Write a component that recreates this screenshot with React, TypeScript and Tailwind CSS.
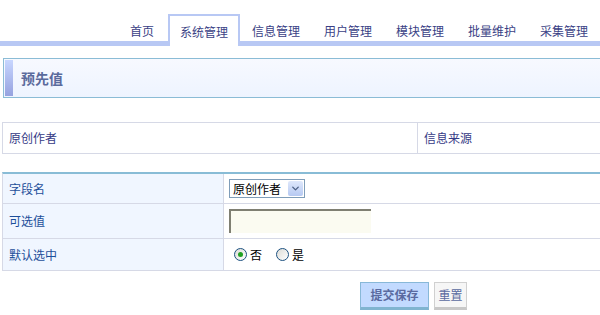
import { ChevronDown } from "lucide-react";

const tabs = ["首页", "系统管理", "信息管理", "用户管理", "模块管理", "批量维护", "采集管理"];

const font = { fontFamily: '"Noto Sans CJK SC", "Noto Sans", sans-serif' };

function Radio({ checked, label }: { checked?: boolean; label: string }) {
  return (
    <label className="flex items-center gap-[3px] text-[12px] text-black">
      <span className="flex h-[13px] w-[13px] items-center justify-center rounded-full border border-[#1c5180] bg-gradient-to-br from-[#dcdcd7] to-white">
        {checked && <span className="h-[5px] w-[5px] rounded-full bg-[#21a121]" />}
      </span>
      {label}
    </label>
  );
}

export default function App() {
  return (
    <div className="w-[600px] h-[315px] overflow-hidden bg-white text-[12px]" style={font}>
      {/* top nav tabs */}
      <div className="flex h-[46px] items-end justify-end border-b-[5px] border-[#b8c8f4]">
        {tabs.map((tab) => {
          const active = tab === "系统管理";
          return (
            <div
              key={tab}
              className={`relative mb-[-5px] flex h-[32px] items-center justify-center pt-[1px] text-[#3a3f85] ${
                tab === "首页" ? "w-[52px]" : "w-[72px]"
              } ${active ? "border-2 border-b-0 border-[#b8c8f4] bg-white" : ""}`}
            >
              {tab}
            </div>
          );
        })}
      </div>

      {/* section title */}
      <div className="ml-[3px] mt-[12px] flex h-[40px] items-stretch border border-r-0 border-[#8bbcd6] bg-gradient-to-b from-[#f7f9ff] to-[#eef4ff] p-[1px] pr-0">
        <div className="w-[8px] bg-gradient-to-b from-[#c8d6ff] to-[#96a2df]" />
        <div className="flex items-center pl-[8px] text-[14px] font-bold text-[#5a6a9c]">预先值</div>
      </div>

      {/* field list */}
      <div className="ml-[2px] mt-[24px] flex h-[32px] border-y border-l border-[#d6d9e6] text-[#363b86]">
        <div className="flex w-[415px] items-center border-r border-[#d6d9e6] pl-[6px]">原创作者</div>
        <div className="flex items-center pl-[6px]">信息来源</div>
      </div>

      {/* edit form */}
      <div className="ml-[2px] mt-[18px] border-t-2 border-l border-[#88bcd6] border-l-[#d6d9e6] text-[#1d4f9a]">
        <div className="flex h-[30px] border-b border-[#d6d9e6]">
          <div className="flex w-[221px] items-center border-r border-[#d6d9e6] bg-[#f0f6ff] pl-[6px]">字段名</div>
          <div className="flex items-center pl-[5px]">
            <div className="flex h-[19px] w-[76px] items-center border border-[#7f9db9] bg-white pl-[3px] pr-[1px] text-[12px] text-black">
              <span className="flex-1">原创作者</span>
              <span className="flex h-[15px] w-[15px] items-center justify-center rounded-[2px] bg-gradient-to-b from-[#dfe8fb] to-[#b6c9f2]">
                <ChevronDown size={11} strokeWidth={3} className="text-[#4d6185]" />
              </span>
            </div>
          </div>
        </div>
        <div className="flex h-[35px] border-b border-[#d6d9e6]">
          <div className="flex w-[221px] items-center border-r border-[#d6d9e6] bg-[#f0f6ff] pl-[6px]">可选值</div>
          <div className="flex items-center pl-[5px]">
            <div className="h-[24px] w-[142px] border-l-2 border-t-2 border-[#7f7f72] bg-[#fbfbf1]" />
          </div>
        </div>
        <div className="flex h-[32px] border-b border-[#d6d9e6]">
          <div className="flex w-[221px] items-center border-r border-[#d6d9e6] bg-[#f0f6ff] pl-[6px]">默认选中</div>
          <div className="flex items-center gap-[14px] pl-[10px]">
            <Radio checked label="否" />
            <Radio label="是" />
          </div>
        </div>
      </div>

      {/* actions */}
      <div className="mt-[11px] flex gap-[5px] pl-[360px]">
        <button
          type="button"
          className="h-[28px] w-[69px] border border-b-[3px] border-[#88b8d8] border-b-[#80b4d0] bg-[#c2daff] text-[12px] font-bold text-[#5a6aa0]"
        >
          提交保存
        </button>
        <button
          type="button"
          className="h-[28px] w-[33px] border border-b-[3px] border-[#d0d0d0] border-b-[#c8c8c8] bg-[#f6f6f6] text-[12px] text-[#5a6aa0]"
        >
          重置
        </button>
      </div>
    </div>
  );
}
